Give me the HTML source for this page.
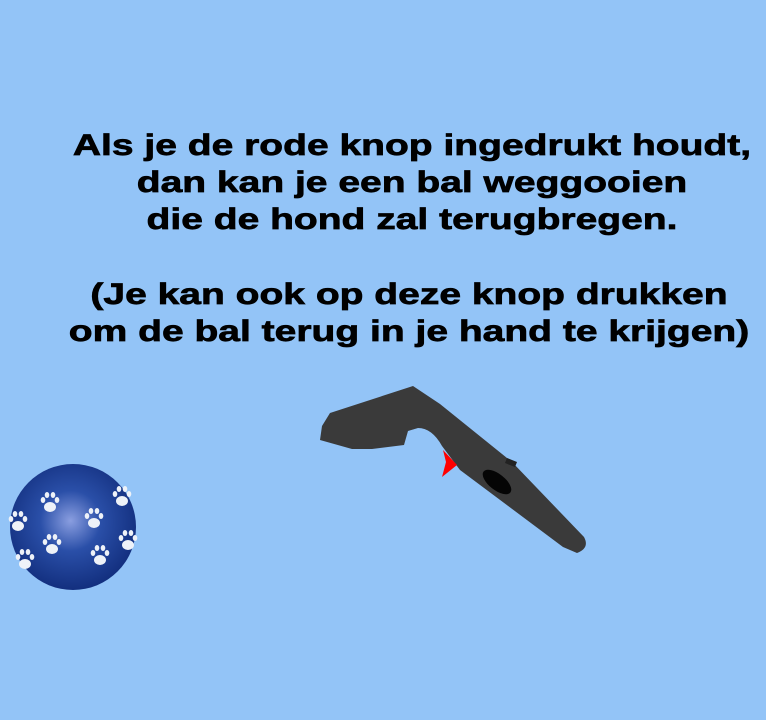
<!DOCTYPE html>
<html><head><style>
body{margin:0;width:766px;height:720px;background:#93c4f7;overflow:hidden;position:relative;font-family:"Liberation Sans",sans-serif}
.t{position:absolute;left:112px;width:600px;text-align:center;font-weight:bold;font-size:30px;line-height:37px;color:#000;transform:scaleX(1.3);transform-origin:center;-webkit-text-stroke:0.7px #000}
</style></head><body>
<div class="t" style="top:127px">Als je de rode knop ingedrukt houdt,<br>dan kan je een bal weggooien<br>die de hond zal terugbregen.</div>
<div class="t" style="top:276px;left:109px">(Je kan ook op deze knop drukken<br>om de bal terug in je hand te krijgen)</div>
<svg width="766" height="720" style="position:absolute;left:0;top:0">
<defs>
<radialGradient id="b" cx="0.48" cy="0.45" r="0.6"><stop offset="0" stop-color="#8a9ee0"/><stop offset="0.4" stop-color="#2a4fa8"/><stop offset="1" stop-color="#0f2a78"/></radialGradient>
<g id="paw" fill="#eef2f8"><ellipse cx="0" cy="4" rx="6" ry="5"/><ellipse cx="-7" cy="-3" rx="2.3" ry="3"/><ellipse cx="-3" cy="-8" rx="2.3" ry="3"/><ellipse cx="3" cy="-8" rx="2.3" ry="3"/><ellipse cx="7" cy="-3" rx="2.3" ry="3"/></g>
</defs>
<path d="M330,413 L413,386 L440,404 L512,462 L584,537 Q590,548 577,553 L563,547 L460,470 L442,446 Q432,428 418,428 L408,431 L404,445 L372,449 L352,449 L320,440 L322,426 Z" fill="#3a3a3a"/>
<polygon points="507,458 517,462 515,467 505,463" fill="#222"/>
<ellipse cx="497" cy="482" rx="17" ry="8" transform="rotate(38 497 482)" fill="#050505"/>
<polygon points="443,450 457,465 442,477 446,462" fill="#f00"/>
<circle cx="73" cy="527" r="63" fill="url(#b)"/>
<use href="#paw" x="50" y="503"/><use href="#paw" x="94" y="519"/><use href="#paw" x="52" y="545"/><use href="#paw" x="100" y="556"/><use href="#paw" x="18" y="522"/><use href="#paw" x="122" y="497"/><use href="#paw" x="25" y="560"/><use href="#paw" x="128" y="541"/>
</svg>
</body></html>
